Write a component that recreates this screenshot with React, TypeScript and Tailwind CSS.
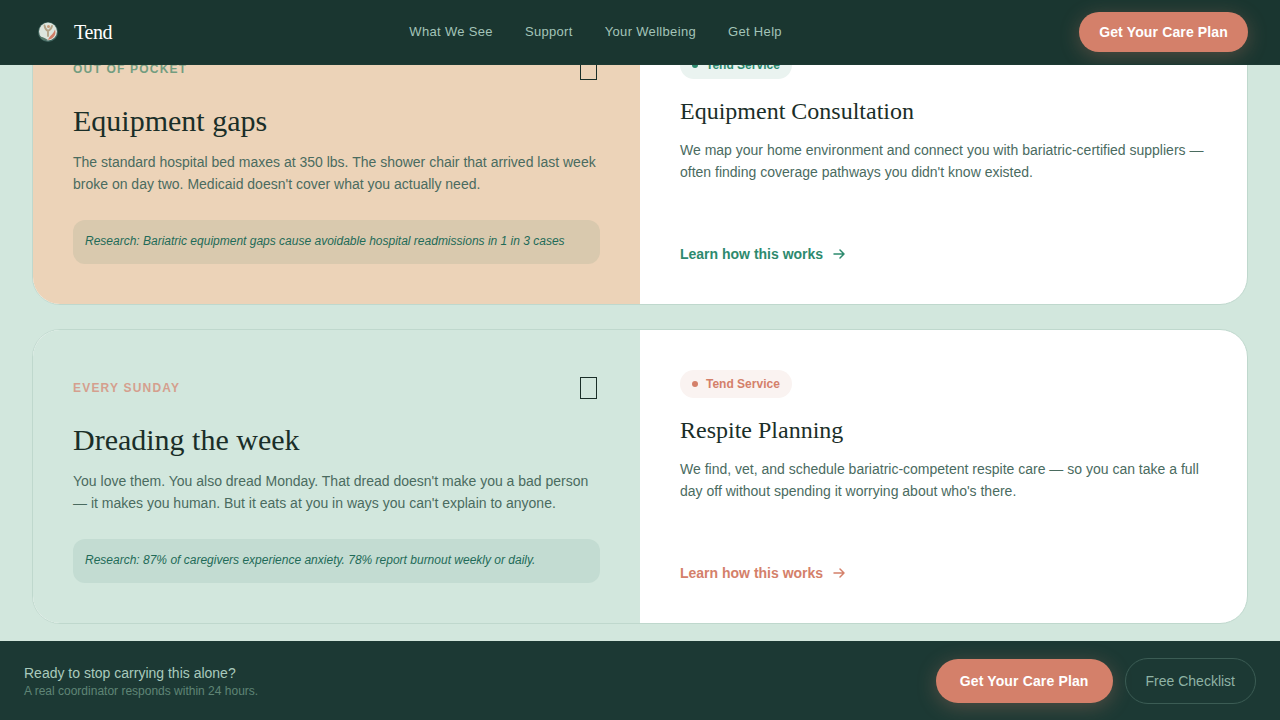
import clsx from 'clsx';

type Tone = 'green' | 'coral';

interface CareCard {
  tag: string;
  title: string;
  body: string;
  research: string;
  service: string;
  serviceBody: string;
  tone: Tone;
}

const NAV_LINKS = ['What We See', 'Support', 'Your Wellbeing', 'Get Help'];

const CARDS: CareCard[] = [
  {
    tag: 'Out of pocket',
    title: 'Equipment gaps',
    body: "The standard hospital bed maxes at 350 lbs. The shower chair that arrived last week broke on day two. Medicaid doesn't cover what you actually need.",
    research: 'Research: Bariatric equipment gaps cause avoidable hospital readmissions in 1 in 3 cases',
    service: 'Equipment Consultation',
    serviceBody:
      "We map your home environment and connect you with bariatric-certified suppliers — often finding coverage pathways you didn't know existed.",
    tone: 'green',
  },
  {
    tag: 'Every Sunday',
    title: 'Dreading the week',
    body: "You love them. You also dread Monday. That dread doesn't make you a bad person — it makes you human. But it eats at you in ways you can't explain to anyone.",
    research: 'Research: 87% of caregivers experience anxiety. 78% report burnout weekly or daily.',
    service: 'Respite Planning',
    serviceBody:
      "We find, vet, and schedule bariatric-competent respite care — so you can take a full day off without spending it worrying about who's there.",
    tone: 'coral',
  },
];

function Logo() {
  return (
    <svg viewBox="0 0 32 32" className="size-8" aria-hidden="true">
      <circle cx="16" cy="16" r="10" fill="#41665f" />
      <circle cx="16" cy="15.500" r="9" fill="#dde5dd" />
      <circle cx="16.500" cy="10.500" r="1.500" fill="#c39a78" />
      <path d="M12.500 9.500c.5 3 1.500 4.500 3.500 5.500 2-1 3.500-2.500 4-5M16 15v5" fill="none" stroke="#b3a184" strokeWidth="1.800" strokeLinecap="round" />
      <path d="M8 20.500c3 .5 5 1.500 8 3.500-3.500 1-6.500 0-8-3.500z" fill="#587a6b" />
      <path d="M23 13.500c1.500 5-1 9-7 10.500 1-3 2.500-4 4-5.500s2-3 3-5z" fill="#d07c66" />
    </svg>
  );
}

function Arrow() {
  return (
    <svg viewBox="0 0 16 16" className="size-4" fill="none" stroke="currentColor" strokeWidth="1.5" strokeLinecap="round" strokeLinejoin="round" aria-hidden="true">
      <path d="M3 8h10M9 4l4 4-4 4" />
    </svg>
  );
}

function Card({ card }: { card: CareCard }) {
  const green = card.tone === 'green';

  return (
    <article className="grid grid-cols-2 overflow-hidden rounded-[28px] border border-[#bfd8cd] bg-white">
      <div className={clsx('p-10', green ? 'bg-[#ecd3b8]' : 'bg-[#d2e7dd]')}>
        <div className="mb-4 flex h-9 items-center justify-between pr-[3px]">
          <span
            className={clsx(
              'text-xs font-bold uppercase tracking-[1.2px]',
              green ? 'text-[#739d80]' : 'text-[#d59f8e]'
            )}
          >
            {card.tag}
          </span>
          <span className="h-[22px] w-[17px] border border-[#1a2e28]" />
        </div>
        <h2 className="mb-3 font-['Liberation_Serif',serif] text-[30px] leading-9 text-[#1a2e28]">
          {card.title}
        </h2>
        <p className="mb-[25px] text-sm leading-[22px] text-[#4a6b5f]">{card.body}</p>
        <p
          className={clsx(
            'rounded-xl px-3 pt-[11px] pb-[13px] text-xs leading-5 italic text-[#1f6b58]',
            green ? 'bg-[#d9c9ae]' : 'bg-[#c3dcd2]'
          )}
        >
          {card.research}
        </p>
      </div>

      <div className="flex flex-col items-start p-10">
        <span
          className={clsx(
            'mb-4 flex h-7 items-center gap-2 rounded-full px-3 text-xs font-bold',
            green ? 'bg-[#eaf3f0] text-[#2d8a6e]' : 'bg-[#faf3f1] text-[#d4806a]'
          )}
        >
          <span className="size-1.5 rounded-full bg-current" />
          Tend Service
        </span>
        <h3 className="mb-3 font-['Liberation_Serif',serif] text-2xl leading-8 text-[#1a2e28]">
          {card.service}
        </h3>
        <p className="text-sm leading-[22px] text-[#4a6b5f]">{card.serviceBody}</p>
        <a
          href="#support"
          className={clsx(
            'mt-auto flex items-center gap-2 text-sm font-bold',
            green ? 'text-[#2d8a6e]' : 'text-[#d4806a]'
          )}
        >
          Learn how this works
          <Arrow />
        </a>
      </div>
    </article>
  );
}

export default function App() {
  return (
    <div className="min-h-screen bg-[#d2e7dd] font-['Liberation_Sans',Arial,sans-serif]">
      <header className="fixed inset-x-0 top-0 z-10 flex h-[65px] items-center justify-between overflow-hidden border-b border-[#1d3a33] bg-[#1a3630] px-8">
        <a href="#top" className="flex items-center gap-2.5">
          <Logo />
          <span className="font-['Liberation_Serif',serif] text-xl tracking-[-0.4px] text-white">Tend</span>
        </a>
        <nav className="flex gap-8">
          {NAV_LINKS.map((link) => (
            <a key={link} href="#support" className="text-[13px] tracking-wide text-[#a3c4b8]">
              {link}
            </a>
          ))}
        </nav>
        <button className="h-10 rounded-full bg-[#d4806a] px-5 text-sm font-bold tracking-[0.01em] text-white shadow-[0_4px_20px_rgba(212,128,106,0.3)]">
          Get Your Care Plan
        </button>
      </header>

      <main className="flex flex-col gap-6 px-8 pt-2.5 pb-20">
        {CARDS.map((card) => (
          <Card key={card.title} card={card} />
        ))}
      </main>

      {/* Sticky call to action */}
      <aside className="fixed inset-x-0 bottom-0 z-10 flex h-[79px] items-center justify-between overflow-hidden bg-[#1c3934] px-6">
        <div>
          <p className="text-sm leading-5 text-[#a9cabd]">Ready to stop carrying this alone?</p>
          <p className="text-xs text-[#5f8576]">A real coordinator responds within 24 hours.</p>
        </div>
        <div className="flex items-center gap-3">
          <button className="h-11 rounded-full bg-[#d4806a] px-6 text-sm font-bold tracking-[0.01em] text-white shadow-[0_4px_20px_rgba(212,128,106,0.3)]">
            Get Your Care Plan
          </button>
          <button className="h-[46px] rounded-full border border-[#3b5c54] px-5 text-sm text-[#8fb3a5]">
            Free Checklist
          </button>
        </div>
      </aside>
    </div>
  );
}
